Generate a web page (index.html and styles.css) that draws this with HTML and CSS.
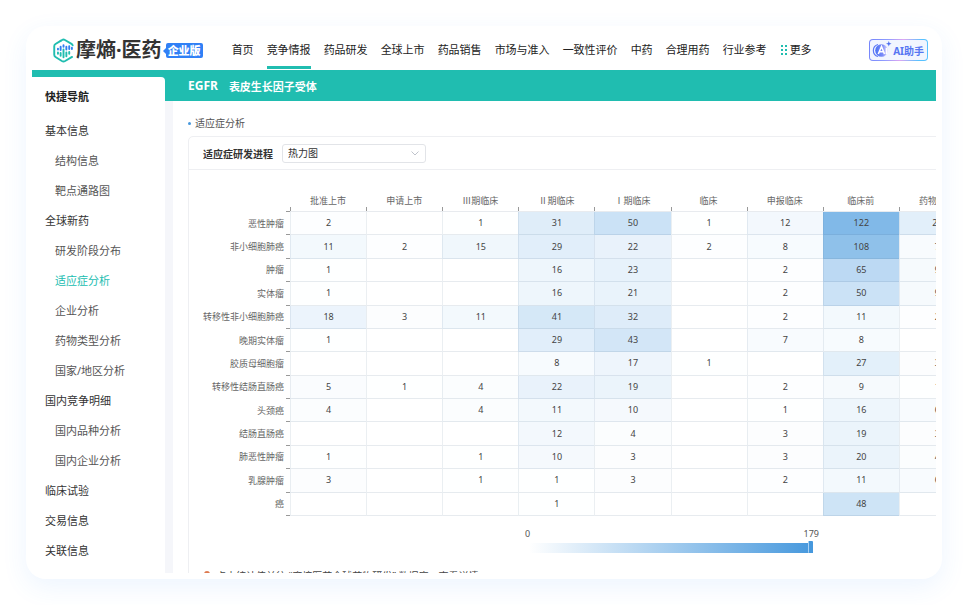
FILE: index.html
```html
<!DOCTYPE html>
<html lang="zh-CN">
<head>
  <meta charset="UTF-8" />
  <meta name="viewport" content="width=device-width, initial-scale=1" />
  <title>EGFR 适应症分析 - 摩熵医药</title>
  <link rel="stylesheet" href="styles.css">
</head>
<body>
  <div class="window">
    <!-- Top navigation -->
    <header class="header">
      <a class="logo" href="#">
        <svg class="logo-mark" viewBox="0 0 22 26" width="21" height="25" fill="none" stroke-width="2" stroke-linecap="round">
          <path stroke="#20bdb0" stroke-linejoin="round" d="M8 2.900 2.600 6.200Q1.300 7 1.300 8.500v9q0 1.500 1.300 2.300L9.300 24q1.700.9 3.400 0l7.300-4.300"/>
          <path stroke="#20bdb0" stroke-linejoin="round" d="M8 2.900 9.500 2q1.500-.9 3 0l6.900 4q1 .6 1.200 1.600"/>
          <path stroke="#2f80f0" d="M5.200 11v1M8 9v3.500M11 7.500V9M14 9v3M17 8.500v3M19.800 10v1.500"/>
          <path stroke="#20bdb0" d="M5.200 15v1.500M8 15.500v3M11 12v8M14 15v4M17 14.500v2"/>
        </svg>
        <span class="logo-text">摩熵·医药</span>
        <span class="logo-badge">企业版</span>
      </a>
      <nav class="nav">
        <a href="#">首页</a>
        <a href="#" class="active">竞争情报</a>
        <a href="#">药品研发</a>
        <a href="#">全球上市</a>
        <a href="#">药品销售</a>
        <a href="#">市场与准入</a>
        <a href="#">一致性评价</a>
        <a href="#">中药</a>
        <a href="#">合理用药</a>
        <a href="#">行业参考</a>
        <a href="#" class="more">
          <svg viewBox="0 0 6 10" width="6" height="10" fill="#20bdb0">
            <path d="M0 0h2v2H0zM4 0h2v2H4zM0 4h2v2H0zM4 4h2v2H4zM0 8h2v2H0zM4 8h2v2H4z"/>
          </svg>更多</a>
      </nav>
      <button class="ai-button" type="button">
        <svg viewBox="0 0 20 18" width="20" height="18">
          <defs>
            <linearGradient id="aiFill" x1="0" x2="1">
              <stop offset="0" stop-color="#4a72f5"/>
              <stop offset=".6" stop-color="#7c8cf8"/>
              <stop offset="1" stop-color="#e4dcff"/>
            </linearGradient>
          </defs>
          <path fill="none" stroke="#5b78f5" stroke-width="1.200" d="M6 3.500a6.200 6.200 0 0 0 0 12"/>
          <circle cx="9.500" cy="9.500" r="6.300" fill="url(#aiFill)"/>
          <path fill="none" stroke="#fff" stroke-width="1.600" d="m6.300 13 3.200-7.500 3 7.500M7.500 10.700h4M14.500 7v6"/>
          <path fill="#4a6cf0" d="m16.800 0 .7 2.100 2.100.7-2.100.7-.7 2.100-.7-2.100-2.100-.7 2.100-.7z"/>
        </svg>
        <span>AI助手</span>
      </button>
    </header>

    <div class="page">
      <aside class="sidebar">
        <nav class="menu">
          <h2>快捷导航</h2>
          <a href="#">基本信息</a>
          <a href="#" class="sub">结构信息</a>
          <a href="#" class="sub">靶点通路图</a>
          <a href="#">全球新药</a>
          <a href="#" class="sub">研发阶段分布</a>
          <a href="#" class="sub active">适应症分析</a>
          <a href="#" class="sub">企业分析</a>
          <a href="#" class="sub">药物类型分析</a>
          <a href="#" class="sub">国家/地区分析</a>
          <a href="#">国内竞争明细</a>
          <a href="#" class="sub">国内品种分析</a>
          <a href="#" class="sub">国内企业分析</a>
          <a href="#">临床试验</a>
          <a href="#">交易信息</a>
          <a href="#">关联信息</a>
        </nav>
      </aside>

      <main class="main">
        <h1 class="target-bar"><span class="target">EGFR</span>表皮生长因子受体</h1>
        <div class="content">
          <h2 class="section-title">适应症分析</h2>
          <section class="panel">
            <div class="panel-head">
              <label for="chartType">适应症研发进程</label>
              <select id="chartType">
                <option>热力图</option>
              </select>
            </div>

            <table class="heatmap">
              <thead>
                <tr id="stages"><td class="corner"></td></tr>
              </thead>
              <tbody id="rows"></tbody>
            </table>

            <!-- Colour scale -->
            <div class="scale">
              <div class="scale-labels"><span>0</span><span>179</span></div>
              <div class="scale-bar"></div>
            </div>

            <p class="note">点击统计值前往 “摩熵医药全球药物研发” 数据库，查看详情</p>
          </section>
        </div>
      </main>
    </div>
  </div>
  <script src="script.js"></script>
</body>
</html>
```

FILE: styles.css
```css
* {
  margin: 0;
  padding: 0;
  box-sizing: border-box;
}
body {
  height: 100vh;
  padding: 26px;
  background: #fff;
  font-family: "Noto Sans", "Noto Sans CJK SC", sans-serif;
  font-size: 11px;
  color: #333;
}
a {
  color: inherit;
  text-decoration: none;
}
.window {
  display: flex;
  flex-direction: column;
  height: 100%;
  padding: 6px;
  background: #fff;
  border-radius: 20px;
  box-shadow: 0 8px 26px rgba(60, 140, 255, 0.09);
}

/* Header */
.header {
  display: flex;
  align-items: center;
  flex: none;
  height: 38px;
  padding: 0 8px 2px 21px;
}
.logo {
  display: flex;
  align-items: center;
  flex: none;
}
.logo-text {
  margin: 0 4px 0 2px;
  font-size: 20px;
  font-weight: 700;
  line-height: 28px;
  color: #333;
}
.logo-badge {
  position: relative;
  padding: 0 2px;
  border-radius: 2px;
  background: #3080f6;
  color: #fff;
  font-weight: 900;
  line-height: 15px;
}
.logo-badge::before {
  content: "";
  position: absolute;
  left: -3px;
  top: 5px;
  border: 3px solid transparent;
  border-left: 0;
  border-right-color: #3080f6;
}
.nav {
  display: flex;
  align-self: flex-start;
  gap: 13px;
  margin-left: 29px;
  white-space: nowrap;
}
.nav a {
  padding-top: 2px;
  line-height: 32px;
  border-bottom: 3px solid transparent;
  color: #222;
}
.nav a.active {
  border-bottom-color: #20bdb0;
}
.nav .more {
  display: flex;
  align-items: center;
  gap: 3px;
  margin-left: 1px;
}
.ai-button {
  display: flex;
  align-items: center;
  flex: none;
  gap: 1px;
  height: 22px;
  margin-left: auto;
  padding: 0 3px 0 2px;
  border: 1px solid transparent;
  border-radius: 4px;
  background:
    linear-gradient(#f1f5ff, #f1f5ff) padding-box,
    linear-gradient(100deg, #7484fb, #8f9cff 30%, #dca6f2 55%, #58c2ff 85%) border-box;
  font-family: inherit;
  font-size: 10px;
  font-weight: 700;
  color: #5676f2;
  cursor: pointer;
}

/* Page body */
.page {
  display: grid;
  grid-template-columns: 133px minmax(0, 1fr);
  flex: 1;
  min-height: 0;
  overflow: hidden;
}
.sidebar {
  padding-top: 7px;
  background: #20bdb0;
}
.menu {
  height: 100%;
  padding: 1px 0 0 13px;
  border-radius: 0 4px 0 0;
  background: #fff;
}
.menu h2 {
  font-size: 11px;
  line-height: 38px;
  color: #222;
}
.menu a {
  display: block;
  line-height: 30px;
}
.menu .sub {
  padding-left: 10px;
  color: #555;
}
.menu .active {
  color: #20bdb0;
}
.main {
  display: flex;
  flex-direction: column;
  min-height: 0;
  overflow: hidden;
}
.target-bar {
  display: flex;
  align-items: center;
  flex: none;
  gap: 11px;
  height: 31px;
  padding: 0 0 0 23px;
  background: #20bdb0;
  color: #fff;
  font-size: 11px;
}
.target {
  font-size: 12px;
}
.content {
  flex: 1;
  min-height: 0;
  padding: 12px 0 0 15px;
  border-left: 8px solid #f5f6fa;
  overflow: hidden;
}
.section-title {
  display: flex;
  align-items: center;
  gap: 4px;
  margin-bottom: 3px;
  font-size: 10px;
  font-weight: 400;
  line-height: 20px;
  color: #555;
}
.section-title::before {
  content: "";
  width: 3px;
  height: 3px;
  border-radius: 50%;
  background: #4698dd;
}

/* The chart is wider than the visible area and is cut at the right */
.panel {
  width: 968px;
  border: 1px solid #eeeff2;
  border-radius: 5px;
}
.panel-head {
  display: flex;
  align-items: center;
  gap: 9px;
  height: 33px;
  padding-left: 14px;
  border-bottom: 1px solid #eeeff2;
  font-size: 10px;
}
.panel-head label {
  font-weight: 700;
}
.panel-head select {
  width: 144px;
  height: 19px;
  padding: 0 5px;
  border: 1px solid #e2e4e8;
  border-radius: 3px;
  appearance: none;
  background: #fff url("data:image/svg+xml,%3Csvg xmlns='http://www.w3.org/2000/svg' width='8' height='5' fill='none' stroke='%23c0c4cc'%3E%3Cpath d='m.5.5 3.500 3.500L7.500.5'/%3E%3C/svg%3E") no-repeat right 6px center;
  font-family: inherit;
  font-size: 10px;
  color: #333;
}

/* Heat map */
.heatmap {
  width: 786px;
  height: 326px;
  margin-top: 20px;
  table-layout: fixed;
  border-collapse: separate;
  border-spacing: 0;
  font-size: 9px;
  line-height: 14px;
  text-align: center;
}
.heatmap th {
  font-weight: 400;
  color: #666;
}
.heatmap .corner {
  width: 101px;
}
.heatmap thead tr {
  height: 22px;
}
.heatmap thead th {
  border-bottom: 1px solid #e8ebef;
  background: linear-gradient(#999, #999) no-repeat left bottom / 1px 4px;
}
.heatmap .corner,
.heatmap tbody th {
  background: linear-gradient(#999, #999) no-repeat right bottom / 4px 1px;
}
.heatmap tbody th {
  padding-right: 6px;
  text-align: right;
}
.heatmap tbody td {
  border-bottom: 1px solid rgba(90, 120, 150, 0.14);
  border-left: 1px solid rgba(90, 120, 150, 0.12);
  background: rgb(70 152 221 / calc(var(--v, 0) / 179));
  color: #444;
}

/* Colour scale */
.scale {
  width: 294px;
  margin: 11px auto 0;
  font-size: 9px;
  color: #555;
}
.scale-labels {
  display: flex;
  justify-content: space-between;
  line-height: 14px;
}
.scale-bar {
  position: relative;
  height: 10px;
  margin: 2px 6px 0 4px;
  background: linear-gradient(to right, #fff, #4698dd);
}
.scale-bar::after {
  content: "";
  position: absolute;
  right: 0;
  top: -2px;
  bottom: 0;
  width: 4px;
  border-left: 1px solid #a9d0f2;
  border-radius: 1px;
  background: #4698dd;
}
.note {
  display: flex;
  align-items: flex-start;
  gap: 6px;
  margin-top: 14px;
  padding-left: 15px;
  font-size: 10px;
  line-height: 18px;
  color: #444;
}
.note::before {
  content: "";
  width: 6px;
  height: 6px;
  margin-top: 4px;
  border-radius: 50%;
  background: #dd7a50;
}
```

FILE: script.js
```javascript
const stages = ["批准上市", "申请上市", "Ⅲ期临床", "Ⅱ期临床", "Ⅰ期临床", "临床", "申报临床", "临床前", "药物发现"];

const data = [
  ["恶性肿瘤", 2, 0, 1, 31, 50, 1, 12, 122, 28],
  ["非小细胞肺癌", 11, 2, 15, 29, 22, 2, 8, 108, 7],
  ["肿瘤", 1, 0, 0, 16, 23, 0, 2, 65, 9],
  ["实体瘤", 1, 0, 0, 16, 21, 0, 2, 50, 9],
  ["转移性非小细胞肺癌", 18, 3, 11, 41, 32, 0, 2, 11, 2],
  ["晚期实体瘤", 1, 0, 0, 29, 43, 0, 7, 8, 0],
  ["胶质母细胞瘤", 0, 0, 0, 8, 17, 1, 0, 27, 3],
  ["转移性结肠直肠癌", 5, 1, 4, 22, 19, 0, 2, 9, 1],
  ["头颈癌", 4, 0, 4, 11, 10, 0, 1, 16, 6],
  ["结肠直肠癌", 0, 0, 0, 12, 4, 0, 3, 19, 3],
  ["肺恶性肿瘤", 1, 0, 1, 10, 3, 0, 3, 20, 4],
  ["乳腺肿瘤", 3, 0, 1, 1, 3, 0, 2, 11, 6],
  ["癌", 0, 0, 0, 1, 0, 0, 0, 48, 0]
];

function addCell(row, tag, text) {
  const cell = document.createElement(tag);
  cell.textContent = text;
  row.appendChild(cell);
  return cell;
}

const head = document.getElementById("stages");
stages.forEach((name) => {
  addCell(head, "th", name).scope = "col";
});

const body = document.getElementById("rows");
data.forEach(([name, ...values]) => {
  const row = document.createElement("tr");
  addCell(row, "th", name).scope = "row";
  values.forEach((value) => {
    // zero cells stay blank
    const cell = addCell(row, "td", value || "");
    cell.style.setProperty("--v", value);
  });
  body.appendChild(row);
});
```
